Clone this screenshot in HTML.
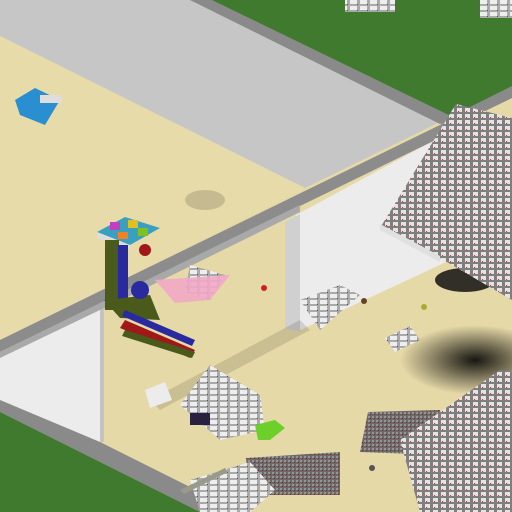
<!DOCTYPE html>
<html><head><style>html,body{margin:0;padding:0;background:#e6d9a8;overflow:hidden}svg{display:block}</style></head>
<body>
<svg width="512" height="512" viewBox="0 0 512 512" xmlns="http://www.w3.org/2000/svg">
<defs>
<pattern id="studs" width="8" height="6" patternUnits="userSpaceOnUse">
<rect width="8" height="6" fill="#7e7e7e"/><rect x="1" y="0" width="5" height="4" fill="#e4e4e4"/><rect x="2" y="3" width="1" height="1" fill="#c33"/>
</pattern>
<pattern id="dark" width="4" height="4" patternUnits="userSpaceOnUse">
<rect width="4" height="4" fill="#6a6a6a"/><rect width="2" height="2" fill="#959595"/><rect x="2" y="2" width="1" height="1" fill="#6a2a2a"/>
</pattern>
<pattern id="white" width="10" height="6" patternUnits="userSpaceOnUse">
<rect width="10" height="6" fill="#a9a9a9"/><rect width="7" height="4" fill="#eeeeee"/><rect x="7" y="4" width="1" height="1" fill="#b22"/>
</pattern>
<radialGradient id="sh" cx="0.5" cy="0.5" r="0.5"><stop offset="0" stop-color="#000" stop-opacity="0.9"/><stop offset="1" stop-color="#000" stop-opacity="0"/></radialGradient>
</defs>
<rect x="0" y="0" width="512" height="512" fill="#e6d9a8"/>
<polygon points="190,0 512,0 512,88 448,118" fill="#3f7a2e"/>
<polygon points="0,0 190,0 440,122 305,188 0,36" fill="#c6c6c6"/>
<polygon points="190,0 212,0 455,118 440,124" fill="#8a8a8a"/>
<polygon points="440,122 512,86 512,98 446,130" fill="#8a8a8a"/>
<polygon points="0,36 305,188 0,340" fill="#e8dbaa"/>
<polygon points="296,215 446,134 446,262 296,332" fill="#ececec"/>
<polygon points="285,222 300,214 300,332 285,328" fill="#d0d0d0"/>
<polygon points="0,340 446,122 452,132 0,352" fill="#8c8c8c"/>
<polygon points="0,352 300,205 300,212 0,360" fill="#a9a9a9"/>
<polygon points="0,358 100,310 100,442 0,400" fill="#ececec"/>
<polygon points="100,310 104,308 104,442 100,442" fill="#c4c4c4"/>
<polygon points="0,400 100,442 240,512 200,512 0,412" fill="#8a8a8a"/>
<polygon points="0,412 200,512 0,512" fill="#3f7a2e"/>
<ellipse cx="205" cy="200" rx="20" ry="10" fill="#000" opacity="0.15"/>
<polygon points="150,400 300,320 310,330 160,410" fill="#000" opacity="0.12"/>
<ellipse cx="475" cy="360" rx="75" ry="35" fill="url(#sh)"/>
<ellipse cx="465" cy="280" rx="30" ry="12" fill="#111" opacity="0.85"/>
<polygon points="456,104 512,118 512,300 440,258 380,228" fill="url(#studs)"/>
<polygon points="380,224 440,256 440,262 380,230" fill="#e0e0e0"/>
<polygon points="246,458 340,452 340,495 250,495" fill="url(#dark)"/>
<polygon points="368,412 440,410 440,455 360,452" fill="url(#dark)"/>
<polygon points="400,440 500,370 512,372 512,512 420,512" fill="url(#studs)"/>
<polygon points="190,480 250,462 275,490 250,512 200,512" fill="url(#white)"/>
<polygon points="180,490 225,468 228,472 184,494" fill="#9a9a8a"/>
<polygon points="180,405 210,365 260,395 265,430 220,440" fill="url(#white)"/>
<polygon points="255,425 275,420 285,428 270,440 258,440" fill="#6ccf2a"/>
<rect x="190" y="413" width="20" height="12" fill="#2a2040"/>
<polygon points="145,390 165,382 172,400 150,408" fill="#ececec"/>
<polygon points="300,300 340,285 360,295 320,330" fill="url(#white)"/>
<polygon points="385,338 410,326 420,340 395,352" fill="url(#white)"/>
<polygon points="190,265 225,275 210,300 185,292" fill="url(#white)"/>
<polygon points="155,280 230,275 210,300 175,303" fill="#f2a7c4" opacity="0.9"/>
<circle cx="264" cy="288" r="3" fill="#c22"/>
<circle cx="424" cy="307" r="3" fill="#aa3"/>
<circle cx="364" cy="301" r="3" fill="#642"/>
<circle cx="372" cy="468" r="3" fill="#555"/>
<polygon points="97,232 125,217 160,228 130,245" fill="#3aa0c0"/>
<polygon points="97,232 130,245 130,250 97,238" fill="#ddd"/>
<rect x="105" y="240" width="14" height="70" fill="#4a5a1a"/>
<rect x="118" y="245" width="10" height="60" fill="#2a2aa0"/>
<polygon points="104,300 150,295 160,320 120,318" fill="#4a5a1a"/>
<polygon points="125,310 195,340 192,346 122,316" fill="#2a2aa0"/>
<polygon points="125,320 195,350 190,358 120,328" fill="#a01818"/>
<polygon points="125,330 195,352 192,358 122,336" fill="#4a5a1a"/>
<circle cx="140" cy="290" r="9" fill="#2a2aa0"/>
<circle cx="145" cy="250" r="6" fill="#a01818"/>
<rect x="110" y="222" width="10" height="8" fill="#c040c0"/><rect x="128" y="220" width="10" height="8" fill="#e0c020"/><rect x="138" y="228" width="10" height="8" fill="#80c020"/><rect x="118" y="232" width="10" height="7" fill="#f08020"/>
<polygon points="15,100 35,88 60,100 45,125 20,115" fill="#2a8fd0"/>
<rect x="40" y="95" width="22" height="8" fill="#ddd"/>
<rect x="345" y="0" width="50" height="12" fill="url(#white)"/>
<rect x="480" y="0" width="32" height="18" fill="url(#white)"/>
</svg>
</body></html>
